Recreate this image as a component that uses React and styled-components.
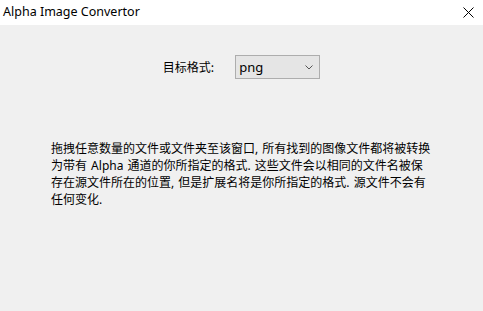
import React from "react";
import styled, { createGlobalStyle } from "styled-components";

const Global = createGlobalStyle`
  html, body { margin: 0; padding: 0; background: #f0f0f0; }
  body { width: 483px; height: 311px; overflow: hidden; }
`;

const Window = styled.div`
  width: 483px;
  height: 311px;
  background: #f0f0f0;
  display: flex;
  flex-direction: column;
  font-family: "Noto Sans", "Noto Sans CJK SC", sans-serif;
  color: #000;
`;

const TitleBar = styled.div`
  height: 25px;
  background: #ffffff;
  display: flex;
  align-items: center;
  justify-content: space-between;
  padding: 0 9px 0 3px;
`;

const Title = styled.div`
  font-size: 12.5px;
  line-height: 16px;
  margin-top: -1px;
`;

const CloseButton = styled.div`
  width: 12px;
  height: 12px;
  display: flex;
  align-items: center;
  justify-content: center;
`;

const FormRow = styled.div`
  margin-top: 30px;
  display: flex;
  justify-content: center;
  align-items: center;
  gap: 21px;
`;

const Label = styled.span`
  font-size: 12px;
  font-family: "Noto Sans CJK SC", sans-serif;
  line-height: 24px;
`;

const Select = styled.div`
  box-sizing: border-box;
  width: 85px;
  height: 24px;
  background: #e5e5e5;
  border: 1px solid #adadad;
  display: flex;
  align-items: center;
  justify-content: space-between;
  padding: 0 6px 0 3px;
  font-size: 13px;
`;

const Description = styled.p`
  margin: 61px 0 0 51px;
  font-size: 12px;
  line-height: 17px;
  word-spacing: 1px;
  font-family: "Noto Sans", "Noto Sans CJK SC", sans-serif;
  color: #000;
`;

export default function App() {
  return (
    <>
      <Global />
      <Window>
        <TitleBar>
          <Title>Alpha Image Convertor</Title>
          <CloseButton>
            <svg width="11" height="11" viewBox="0 0 11 11">
              <path d="M0.5 0.5 L10.5 10.5 M10.5 0.5 L0.5 10.5" stroke="#000" strokeWidth="1" fill="none" />
            </svg>
          </CloseButton>
        </TitleBar>
        <FormRow>
          <Label>目标格式:</Label>
          <Select>
            <span>png</span>
            <svg width="8" height="5" viewBox="0 0 8 5">
              <path d="M0.5 0.5 L4 4 L7.5 0.5" stroke="#555" strokeWidth="1" fill="none" />
            </svg>
          </Select>
        </FormRow>
        <Description>
          拖拽任意数量的文件或文件夹至该窗口, 所有找到的图像文件都将被转换
          <br />
          为带有 Alpha 通道的你所指定的格式. 这些文件会以相同的文件名被保
          <br />
          存在源文件所在的位置, 但是扩展名将是你所指定的格式. 源文件不会有
          <br />
          任何变化.
        </Description>
      </Window>
    </>
  );
}
